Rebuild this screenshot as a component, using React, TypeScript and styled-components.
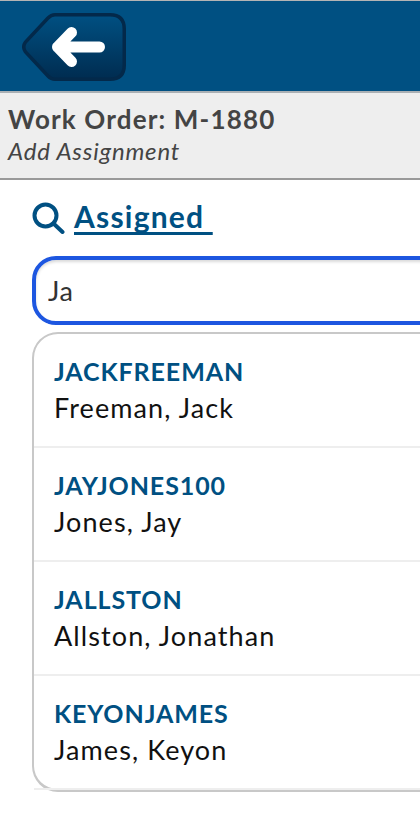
import React from "react";
import styled, { createGlobalStyle } from "styled-components";

const Global = createGlobalStyle`
  html, body { margin: 0; padding: 0; background: #fff; overflow: hidden; }
  body { font-family: "Lato", "Noto Sans", sans-serif; }
`;
const Page = styled.div`
  width: 420px; height: 814px; overflow: hidden; background: #fff;
`;
const TopBar = styled.header`
  height: 90px; background: #005082; border-top: 1px solid #b4b4b4; border-bottom: 2px solid #aab0b4;
  display: flex; align-items: center; padding-left: 22px; box-sizing: content-box;
`;
const BackIcon = styled.svg`
  display: block; width: 105px; height: 70px;
`;
const InfoPanel = styled.section`
  height: 85px; background: #eeeeee; border-bottom: 2px solid #999; box-sizing: content-box;
  padding-left: 8px; display: flex; flex-direction: column;
`;
const Title = styled.h1`
  margin: 10px 0 0; font: 700 26px/32px "Lato", sans-serif; letter-spacing: 1.15px; color: #444;
`;
const Subtitle = styled.div`
  margin-top: 1px; font: italic 400 24px/30px "Lato", sans-serif; letter-spacing: .8px; color: #444;
`;
const Content = styled.main`
  padding: 22px 0 0 32px; width: 480px; box-sizing: border-box;
`;
const Heading = styled.div`
  display: flex; align-items: center; height: 31px; gap: 9px; color: #005082;
`;
const HeadingLink = styled.a`
  margin-top: -4px;
  font: 700 30px/34px "Lato", sans-serif; letter-spacing: 1.2px; color: #005082; text-decoration: underline; text-decoration-thickness: 3px; text-underline-offset: 4px; text-decoration-skip-ink: none; white-space: pre;
`;
const SearchInput = styled.input`
  display: block; box-sizing: border-box; width: 100%; height: 69px; margin-top: 23px; padding: 0 12px;
  border: 4px solid #1d56e0; border-radius: 24px; outline: none; background: #fff;
  box-shadow: inset 0 2px 3px rgba(0,0,0,.15);
  font: 400 27px "Lato", sans-serif; letter-spacing: .6px; color: #333;
`;
const List = styled.ul`
  list-style: none; margin: 7px 0 0; padding: 0; height: 460px; box-sizing: border-box;
  border: 2px solid #c8c8c8; border-bottom-width: 3px; border-radius: 26px;
`;
const Row = styled.li`
  height: 114px; box-sizing: border-box; padding: 20px 0 0 20px; border-bottom: 2px solid #eeeeee;
`;
const Code = styled.div`
  font: 700 25px/34px "Lato", sans-serif; letter-spacing: .9px; color: #005082;
`;
const Name = styled.div`
  margin-top: 1px; font: 400 27px/38px "Lato", sans-serif; letter-spacing: 1.1px; color: #111;
`;

const items = [
  ["JACKFREEMAN", "Freeman, Jack"],
  ["JAYJONES100", "Jones, Jay"],
  ["JALLSTON", "Allston, Jonathan"],
  ["KEYONJAMES", "James, Keyon"],
];

export default function App() {
  return (
    <Page>
      <Global />
      <TopBar>
        <BackIcon viewBox="0 0 105 70">
          <defs>
            <linearGradient id="bk" x1="0" y1="0" x2="0" y2="1">
              <stop offset="0" stopColor="#005082" />
              <stop offset="1" stopColor="#002c50" />
            </linearGradient>
          </defs>
          <path d="M33 3.75H88Q102.25 3.75 102.25 18V54Q102.25 68.25 88 68.25H33Q29 68.25 26 65L3.5 41Q0 36 3.5 31L26 7Q29 3.75 33 3.75Z" fill="url(#bk)" stroke="#03294a" strokeWidth="3.5" />
          <path d="M35.5 36H77.5M49.5 21.5L35.5 36L49.5 50.5" fill="none" stroke="#fff" strokeWidth="11" strokeLinecap="round" strokeLinejoin="round" />
        </BackIcon>
      </TopBar>
      <InfoPanel>
        <Title>Work Order: M-1880</Title>
        <Subtitle>Add Assignment</Subtitle>
      </InfoPanel>
      <Content>
        <Heading>
          <svg width="33" height="33" viewBox="0 0 33 33" fill="none" stroke="#005082" strokeWidth="4" strokeLinecap="round">
            <circle cx="13.5" cy="14.5" r="11" />
            <path d="M21.5 22.5L30.5 31" />
          </svg>
          <HeadingLink href="#">{"Assigned "}</HeadingLink>
        </Heading>
        <SearchInput defaultValue="Ja" />
        <List>
          {items.map(([c, n]) => (
            <Row key={c}>
              <Code>{c}</Code>
              <Name>{n}</Name>
            </Row>
          ))}
        </List>
      </Content>
    </Page>
  );
}
